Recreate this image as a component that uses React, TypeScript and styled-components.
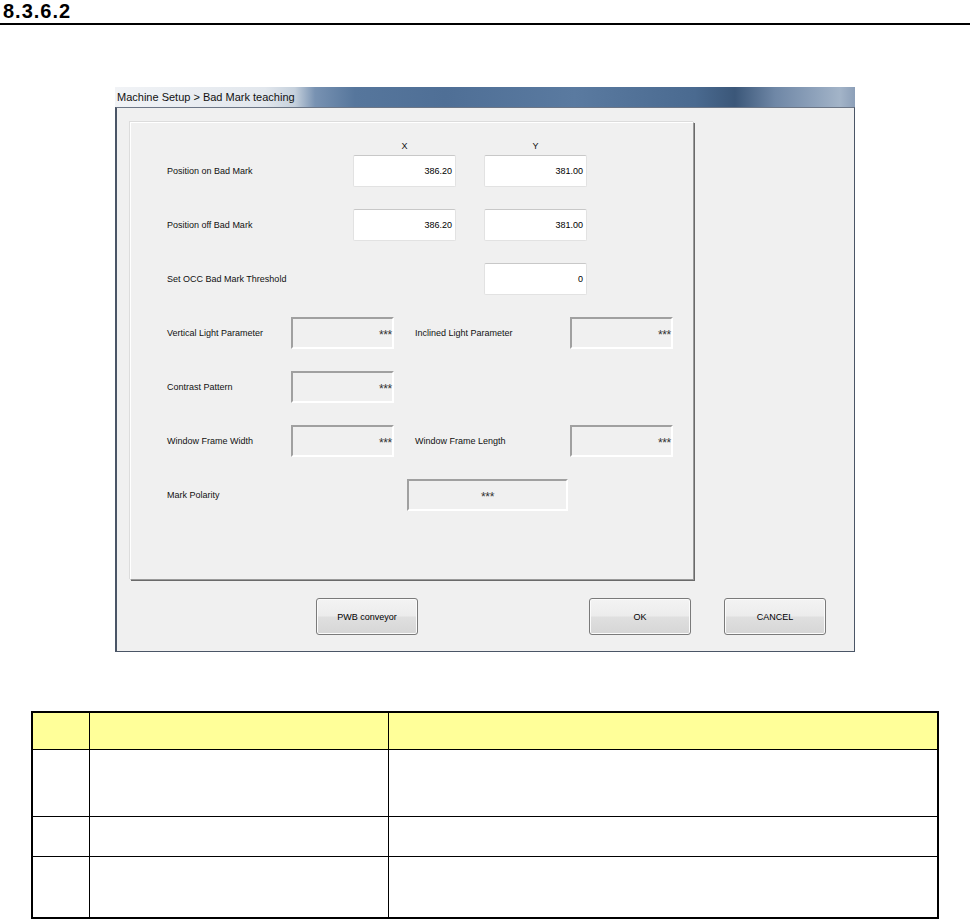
import React from 'react';
import styled, { createGlobalStyle } from 'styled-components';

const GlobalStyle = createGlobalStyle`
  html, body {
    margin: 0;
    padding: 0;
    background: #ffffff;
  }
  body {
    font-family: "Liberation Sans", Arial, sans-serif;
  }
`;

const Page = styled.div`
  width: 970px;
  height: 920px;
  overflow: hidden;
  background: #fff;
`;

const SectionHeading = styled.div`
  height: 25px;
  padding-left: 3px;
  box-sizing: border-box;
  border-bottom: 2px solid #000;
  font-family: "Liberation Sans", Arial, sans-serif;
  font-weight: bold;
  font-size: 20px;
  letter-spacing: 1px;
  line-height: 22px;
  color: #000;
`;

const Window = styled.div`
  width: 740px;
  margin: 62px 0 0 115px;
`;

const TitleBar = styled.div`
  height: 20px;
  padding-left: 2px;
  box-sizing: border-box;
  font-size: 11px;
  line-height: 20px;
  color: #111;
  background: linear-gradient(
    90deg,
    #f1f3f6 0px,
    #e2e7ed 150px,
    #c5d0dc 180px,
    #7892b2 200px,
    #56769c 240px,
    #4f6f96 330px,
    #5a7aa0 460px,
    #4a6a90 580px,
    #3b5779 620px,
    #6f87a6 660px,
    #8ea2bb 700px,
    #a3b4c8 725px,
    #8c9fb8 740px
  );
`;

const Client = styled.div`
  height: 545px;
  box-sizing: border-box;
  background: #f0f0f0;
  border: 1px solid #4a5566;
  border-top-color: #6c7686;
  border-left-width: 2px;
  padding: 14px 0 0 13px;
  display: flex;
  flex-direction: column;
`;

const GroupBox = styled.div`
  width: 564px;
  height: 458px;
  box-sizing: border-box;
  border: 1px solid;
  border-color: #ffffff #9a9a9a #9a9a9a #ffffff;
  box-shadow: -1px -1px 0 #dcdcdc, 1px 1px 0 #6a6a6a;
  padding: 16px 0 0 36px;
  display: flex;
  flex-direction: column;
  gap: 22px;
`;

const AxisHeader = styled.div`
  display: grid;
  grid-template-columns: 186px 103px 28px 103px;
  height: 14px;
  margin-bottom: -20px;
  font-size: 9px;
  line-height: 14px;
  color: #111;
`;

const AxisLabel = styled.span<{ $col: number }>`
  grid-column: ${p => p.$col};
  text-align: center;
`;

const Row = styled.div<{ $cols: string }>`
  display: grid;
  grid-template-columns: ${p => p.$cols};
  align-items: center;
  height: 32px;
`;

const Label = styled.span`
  font-size: 9px;
  color: #111;
  white-space: nowrap;
`;

const ValueBox = styled.div`
  height: 32px;
  box-sizing: border-box;
  background: #fff;
  border: 1px solid #e2e2e2;
  border-top-color: #c8c8c8;
  border-radius: 2px;
  padding-right: 3px;
  display: flex;
  align-items: center;
  justify-content: flex-end;
  font-size: 9px;
  color: #000;
`;

const ReadBox = styled.div<{ $center?: boolean }>`
  height: 32px;
  box-sizing: border-box;
  background: #f0f0f0;
  border: 2px solid;
  border-color: #a0a0a0 #ffffff #ffffff #a0a0a0;
  display: flex;
  align-items: center;
  justify-content: ${p => (p.$center ? 'center' : 'flex-end')};
  padding-top: 4px;
  font-size: 12px;
  color: #333;
  letter-spacing: -0.3px;
`;

const ButtonRow = styled.div`
  display: flex;
  padding: 18px 0 0 186px;
`;

const DialogButton = styled.button<{ $gap?: number }>`
  width: 102px;
  height: 37px;
  margin-left: ${p => p.$gap ?? 0}px;
  border: 1px solid #7a7a7a;
  border-radius: 3px;
  background: linear-gradient(180deg, #f3f3f3 0%, #ececec 48%, #dfdfdf 52%, #d6d6d6 100%);
  box-shadow: inset 0 0 0 1px #fbfbfb;
  font-family: "Liberation Sans", Arial, sans-serif;
  font-size: 9px;
  color: #000;
  padding: 0;
`;

const Table = styled.table`
  border-collapse: collapse;
  margin: 59px 0 0 31px;
  width: 908px;
  border: 2px solid #000;
`;

const HeadCell = styled.th<{ $w?: number }>`
  height: 36px;
  background: #ffff99;
  border: 1px solid #000;
  width: ${p => (p.$w ? `${p.$w}px` : 'auto')};
  padding: 0;
`;

const Cell = styled.td<{ $h: number }>`
  height: ${p => p.$h}px;
  border: 1px solid #000;
  padding: 0;
`;

const App: React.FC = () => {
  const bodyRows = [66, 39, 60];

  return (
    <Page>
      <GlobalStyle />
      <SectionHeading>8.3.6.2</SectionHeading>

      <Window>
        <TitleBar>Machine Setup &gt; Bad Mark teaching</TitleBar>
        <Client>
          <GroupBox>
            <AxisHeader>
              <AxisLabel $col={2}>X</AxisLabel>
              <AxisLabel $col={4}>Y</AxisLabel>
            </AxisHeader>

            <Row $cols="186px 103px 28px 103px">
              <Label>Position on Bad Mark</Label>
              <ValueBox>386.20</ValueBox>
              <span />
              <ValueBox>381.00</ValueBox>
            </Row>

            <Row $cols="186px 103px 28px 103px">
              <Label>Position off Bad Mark</Label>
              <ValueBox>386.20</ValueBox>
              <span />
              <ValueBox>381.00</ValueBox>
            </Row>

            <Row $cols="317px 103px">
              <Label>Set OCC Bad Mark Threshold</Label>
              <ValueBox>0</ValueBox>
            </Row>

            <Row $cols="124px 103px 21px 155px 103px">
              <Label>Vertical Light Parameter</Label>
              <ReadBox>***</ReadBox>
              <span />
              <Label>Inclined Light Parameter</Label>
              <ReadBox>***</ReadBox>
            </Row>

            <Row $cols="124px 103px">
              <Label>Contrast Pattern</Label>
              <ReadBox>***</ReadBox>
            </Row>

            <Row $cols="124px 103px 21px 155px 103px">
              <Label>Window Frame Width</Label>
              <ReadBox>***</ReadBox>
              <span />
              <Label>Window Frame Length</Label>
              <ReadBox>***</ReadBox>
            </Row>

            <Row $cols="240px 161px">
              <Label>Mark Polarity</Label>
              <ReadBox $center>***</ReadBox>
            </Row>
          </GroupBox>

          <ButtonRow>
            <DialogButton>PWB conveyor</DialogButton>
            <DialogButton $gap={171}>OK</DialogButton>
            <DialogButton $gap={33}>CANCEL</DialogButton>
          </ButtonRow>
        </Client>
      </Window>

      <Table>
        <thead>
          <tr>
            <HeadCell $w={56} />
            <HeadCell $w={298} />
            <HeadCell />
          </tr>
        </thead>
        <tbody>
          {bodyRows.map((h, i) => (
            <tr key={i}>
              <Cell $h={h} />
              <Cell $h={h} />
              <Cell $h={h} />
            </tr>
          ))}
        </tbody>
      </Table>
    </Page>
  );
};

export default App;
